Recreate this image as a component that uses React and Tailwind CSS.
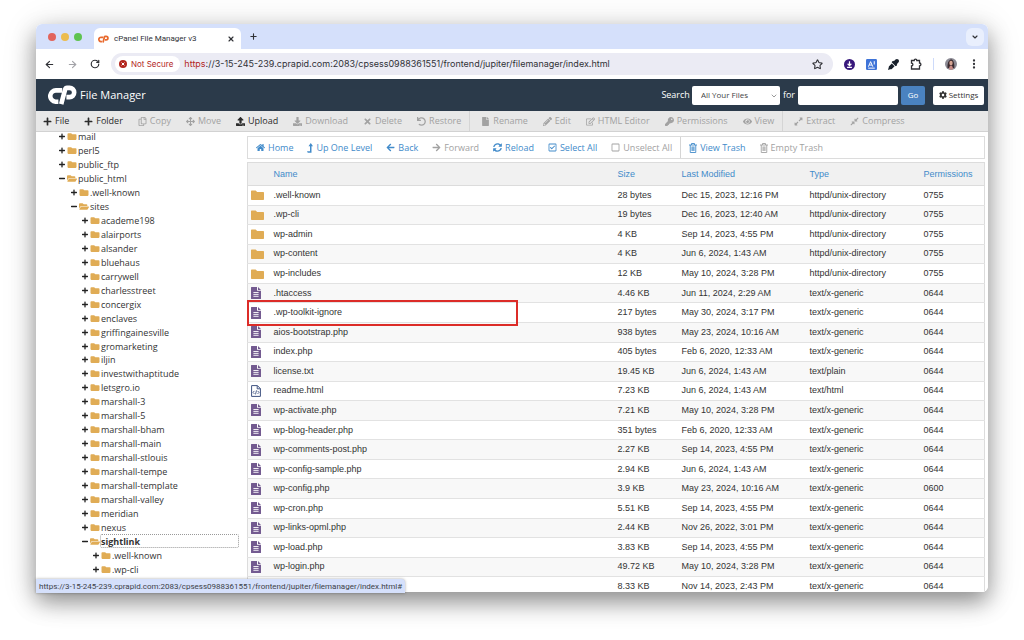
import React, { useState } from "react";
import {
    FaPlus, FaMinus, FaRegCopy, FaArrowsAlt, FaUpload, FaDownload, FaTimes, FaUndo, FaFile, FaPencilAlt,
    FaRegEdit, FaKey, FaEye, FaExpandAlt, FaCompressAlt, FaHome, FaArrowLeft, FaArrowRight,
    FaSyncAlt, FaRegCheckSquare, FaRegSquare, FaCog, FaFolder, FaFolderOpen, FaEyeDropper,
} from "react-icons/fa";
import { ArrowLeft, ArrowRight, RotateCw, X, Plus, ChevronDown, Star, EllipsisVertical } from "lucide-react";

const TrashIcon = () => (
    <svg viewBox="0 0 16 20" className="h-[10px] w-2 shrink-0" fill="none" stroke="currentColor" strokeWidth="1.8">
        <path d="M0 4h16M5 4V1h6v3M2.5 4v15h11V4M6 7v9M8 7v9M10 7v9" />
    </svg>
);

const LevelUpIcon = () => (
    <svg viewBox="0 0 12 20" className="h-[10px] w-1.5 shrink-0" fill="currentColor">
        <path d="M7.5 0 12 6.5H9V19.5H1.5L0 16.5H6V6.5H3Z" />
    </svg>
);

const CpanelLogo = ({ className }) => (
    <svg viewBox="0 0 29 20" className={className} fill="none" stroke="currentColor" strokeWidth="4.6">
        <path d="M14.2 5.4H8.2A5.5 5.5 0 0 0 7.6 16.7H10.4" />
        <path d="M13.2 19.2 17.2 4.2Q17.6 2.9 19 2.9H21.6A4.6 4.6 0 0 1 21.6 12.1H18.4" />
    </svg>
);

const toolbarGroups = [
    [
        { label: "File", Icon: FaPlus, enabled: true },
        { label: "Folder", Icon: FaPlus, enabled: true },
        { label: "Copy", Icon: FaRegCopy },
        { label: "Move", Icon: FaArrowsAlt },
        { label: "Upload", Icon: FaUpload, enabled: true },
        { label: "Download", Icon: FaDownload },
        { label: "Delete", Icon: FaTimes },
        { label: "Restore", Icon: FaUndo },
    ],
    [
        { label: "Rename", Icon: FaFile },
        { label: "Edit", Icon: FaPencilAlt },
        { label: "HTML Editor", Icon: FaRegEdit },
        { label: "Permissions", Icon: FaKey },
        { label: "View", Icon: FaEye },
    ],
    [
        { label: "Extract", Icon: FaExpandAlt },
        { label: "Compress", Icon: FaCompressAlt },
    ],
];

const navGroups = [
    [
        { label: "Home", Icon: FaHome, enabled: true },
        { label: "Up One Level", Icon: LevelUpIcon, enabled: true },
        { label: "Back", Icon: FaArrowLeft, enabled: true },
        { label: "Forward", Icon: FaArrowRight },
        { label: "Reload", Icon: FaSyncAlt, enabled: true },
        { label: "Select All", Icon: FaRegCheckSquare, enabled: true },
        { label: "Unselect All", Icon: FaRegSquare },
    ],
    [
        { label: "View Trash", Icon: TrashIcon, enabled: true },
        { label: "Empty Trash", Icon: TrashIcon },
    ],
];

const siteFolders = [
    "academe198", "alairports", "alsander", "bluehaus", "carrywell", "charlesstreet", "concergix", "enclaves",
    "griffingainesville", "gromarketing", "iljin", "investwithaptitude", "letsgro.io", "marshall-3", "marshall-5",
    "marshall-bham", "marshall-main", "marshall-stlouis", "marshall-tempe", "marshall-template", "marshall-valley",
    "meridian", "nexus",
];

const tree = [
    { name: "mail", level: 0 },
    { name: "perl5", level: 0 },
    { name: "public_ftp", level: 0 },
    { name: "public_html", level: 0, open: true },
    { name: ".well-known", level: 1 },
    { name: "sites", level: 1, open: true },
    ...siteFolders.map((name) => ({ name, level: 2 })),
    { name: "sightlink", level: 2, open: true },
    { name: ".well-known", level: 3 },
    { name: ".wp-cli", level: 3 },
];

const levelPadding = ["pl-[23px]", "pl-[35px]", "pl-[46px]", "pl-[57px]"];

const files = [
    [".well-known", "28 bytes", "Dec 15, 2023, 12:16 PM", "httpd/unix-directory", "0755"],
    [".wp-cli", "19 bytes", "Dec 16, 2023, 12:40 AM", "httpd/unix-directory", "0755"],
    ["wp-admin", "4 KB", "Sep 14, 2023, 4:55 PM", "httpd/unix-directory", "0755"],
    ["wp-content", "4 KB", "Jun 6, 2024, 1:43 AM", "httpd/unix-directory", "0755"],
    ["wp-includes", "12 KB", "May 10, 2024, 3:28 PM", "httpd/unix-directory", "0755"],
    [".htaccess", "4.46 KB", "Jun 11, 2024, 2:29 AM", "text/x-generic", "0644"],
    [".wp-toolkit-ignore", "217 bytes", "May 30, 2024, 3:17 PM", "text/x-generic", "0644"],
    ["aios-bootstrap.php", "938 bytes", "May 23, 2024, 10:16 AM", "text/x-generic", "0644"],
    ["index.php", "405 bytes", "Feb 6, 2020, 12:33 AM", "text/x-generic", "0644"],
    ["license.txt", "19.45 KB", "Jun 6, 2024, 1:43 AM", "text/plain", "0644"],
    ["readme.html", "7.23 KB", "Jun 6, 2024, 1:43 AM", "text/html", "0644"],
    ["wp-activate.php", "7.21 KB", "May 10, 2024, 3:28 PM", "text/x-generic", "0644"],
    ["wp-blog-header.php", "351 bytes", "Feb 6, 2020, 12:33 AM", "text/x-generic", "0644"],
    ["wp-comments-post.php", "2.27 KB", "Sep 14, 2023, 4:55 PM", "text/x-generic", "0644"],
    ["wp-config-sample.php", "2.94 KB", "Jun 6, 2024, 1:43 AM", "text/x-generic", "0644"],
    ["wp-config.php", "3.9 KB", "May 23, 2024, 10:16 AM", "text/x-generic", "0600"],
    ["wp-cron.php", "5.51 KB", "Sep 14, 2023, 4:55 PM", "text/x-generic", "0644"],
    ["wp-links-opml.php", "2.44 KB", "Nov 26, 2022, 3:01 PM", "text/x-generic", "0644"],
    ["wp-load.php", "3.83 KB", "Sep 14, 2023, 4:55 PM", "text/x-generic", "0644"],
    ["wp-login.php", "49.72 KB", "May 10, 2024, 3:28 PM", "text/x-generic", "0644"],
    ["", "8.33 KB", "Nov 14, 2023, 2:43 PM", "text/x-generic", "0644"],
];

const FileIcon = ({ type }) => {
    if (type === "httpd/unix-directory") {
        return (
            <svg viewBox="0 0 13 12" className="block h-[12px] w-[13px]">
                <path d="M0 2.2Q0 1.5.7 1.5H4.6L6.2 3H12.3Q13 3 13 3.7V10.3Q13 11 12.3 11H.7Q0 11 0 10.3Z" fill="#e0ac55" />
            </svg>
        );
    }
    if (type === "text/html") {
        return (
            <svg viewBox="0 0 10 12" className="block h-[12px] w-[10px]" fill="none" stroke="#3f5280">
                <path d="M.6.6H6.4L9.4 3.6V11.4H.6ZM6.2.6V3.8H9.4" fill="#fff" />
                <path d="M3.4 5.9 2 7.4 3.4 8.9M6.6 5.9 8 7.4 6.6 8.9M5.5 5.4 4.5 9.4" strokeWidth=".9" />
            </svg>
        );
    }
    return (
        <svg viewBox="0 0 10 12" className="block h-[12px] w-[10px]">
            <path d="M.5 0H6V3.8H10V11.5Q10 12 9.5 12H.5Q0 12 0 11.5V.5Q0 0 .5 0ZM7 0 10 2.9H7Z" fill="#735a90" />
            <path d="M2.4 5.5h5.2M2.4 7.4h5.2M2.4 9.3h5.2" stroke="#fff" strokeWidth=".9" />
        </svg>
    );
};

const ActionGroups = ({ groups, enabledClass, groupClass }) => (
    <>
        {groups.map((group, i) => (
            <div key={i} className={`flex items-center ${groupClass} ${i > 0 ? "border-l border-[#d5d5d5]" : ""}`}>
                {group.map(({ label, Icon, enabled }) => (
                    <button
                        key={label}
                        type="button"
                        disabled={!enabled}
                        className={`flex items-center gap-[3px] whitespace-nowrap ${enabled ? enabledClass : "text-[#a2a2a2]"}`}
                    >
                        <Icon className="h-[9px] w-[9px] shrink-0" />
                        {label}
                    </button>
                ))}
            </div>
        ))}
    </>
);

const BrowserChrome = () => (
    <div className="shrink-0 font-[Inter,sans-serif] text-[#303136]">
        <div className="flex h-[25px] items-center bg-[#d5e0fb]">
            <div className="flex w-[58px] gap-[5px] pl-3">
                <span className="h-2 w-2 rounded-full bg-[#e2645c]" />
                <span className="h-2 w-2 rounded-full bg-[#ecbc4f]" />
                <span className="h-2 w-2 rounded-full bg-[#5fc350]" />
            </div>
            <div className="flex h-[21px] w-[147px] items-center self-end rounded-t-md bg-white pr-1.5 pl-1 font-[Roboto,sans-serif] text-[8px]">
                <CpanelLogo className="mr-[5px] h-[8px] w-[11px] text-[#e8692d]" />
                <span className="flex-1">cPanel File Manager v3</span>
                <button type="button" aria-label="Close tab"><X className="h-2 w-2" strokeWidth={3.5} /></button>
            </div>
            <button type="button" aria-label="New tab" className="ml-2"><Plus className="h-[9px] w-[9px]" strokeWidth={3} /></button>
            <button type="button" aria-label="Search tabs" className="mr-1 ml-auto flex h-[18px] w-[18px] items-center justify-center rounded-md bg-[#e9effd]">
                <ChevronDown className="h-2 w-2" strokeWidth={3.5} />
            </button>
        </div>
        <div className="flex h-[30px] items-center bg-white px-2">
            <button type="button" aria-label="Back"><ArrowLeft className="h-[11px] w-[11px]" strokeWidth={2.4} /></button>
            <button type="button" aria-label="Forward" className="ml-3"><ArrowRight className="h-[11px] w-[11px] text-[#a3a3a8]" strokeWidth={2.4} /></button>
            <button type="button" aria-label="Reload" className="ml-3"><RotateCw className="h-[10px] w-[10px]" strokeWidth={2.8} /></button>
            <div className="ml-[11px] flex h-[22px] flex-1 items-center rounded-full bg-[#ebebf4] pr-2.5 pl-1 text-[9px]">
                <button type="button" className="flex h-4 items-center gap-1 rounded-full bg-white pr-[7px] pl-1 text-[8px] text-[#b3261e]">
                    <svg viewBox="0 0 8 8" className="h-2 w-2">
                        <circle cx="4" cy="4" r="4" fill="#b3261e" />
                        <path d="m2.6 2.6 2.8 2.8M5.4 2.6 2.6 5.4" stroke="#fff" strokeWidth="1" />
                    </svg>
                    Not Secure
                </button>
                <span className="ml-1 text-[#b3261e]">https</span>
                <input
                    aria-label="Address"
                    defaultValue="://3-15-245-239.cprapid.com:2083/cpsess0988361551/frontend/jupiter/filemanager/index.html"
                    className="min-w-0 flex-1 bg-transparent outline-none"
                />
                <button type="button" aria-label="Bookmark"><Star className="h-[11px] w-[11px]" strokeWidth={2.4} /></button>
            </div>
            <div className="ml-[11px] flex items-center gap-[11px]">
                <svg viewBox="0 0 10 10" className="h-[11px] w-[11px]">
                    <circle cx="5" cy="5" r="5" fill="#38187c" />
                    <path d="M5 2v3.6M3.3 4.3 5 6l1.7-1.7M2.8 7.6h4.4" fill="none" stroke="#fff" strokeWidth="1.1" />
                </svg>
                <svg viewBox="0 0 10 10" className="h-[11px] w-[11px]">
                    <rect width="10" height="10" rx="1.2" fill="#3f74d8" />
                    <path d="M2.2 7 4.2 2.4 6.2 7M3 5.5h2.4M7.5 2v3M2 8.3h6" fill="none" stroke="#fff" strokeWidth=".9" />
                </svg>
                <FaEyeDropper className="h-[11px] w-[11px] text-[#17202b]" />
                <svg viewBox="0 0 12 12" className="h-3 w-3" fill="none" stroke="#303136" strokeWidth="1.3">
                    <path d="M1.5 2.5H4.2a1.3 1.3 0 0 1 2.6 0H9.5V5a1.4 1.4 0 0 1 0 2.8V11H1.5V8a1.4 1.4 0 0 0 0-2.8Z" />
                </svg>
                <span className="h-3 w-px bg-[#cddafa]" />
                <svg viewBox="0 0 12 12" className="h-3 w-3">
                    <circle cx="6" cy="6" r="6" fill="#8b8a94" />
                    <path d="M2.5 10Q2 3 6 1.2 9.6 2 9.3 10Z" fill="#3b2b30" />
                    <ellipse cx="6" cy="5" rx="1.7" ry="2.2" fill="#d6a593" />
                    <path d="M4 11.5Q4.2 7.6 6 7.6T8 11.5Z" fill="#c88b86" />
                </svg>
                <button type="button" aria-label="Menu"><EllipsisVertical className="h-3 w-3" strokeWidth={2.6} /></button>
            </div>
        </div>
    </div>
);

const AppHeader = () => (
    <header className="flex h-8 shrink-0 items-center bg-[#2b3a4a] pr-1 pl-3 text-[9px] text-white">
        <CpanelLogo className="h-5 w-[29px]" />
        <h1 className="ml-[3px] flex-1 text-[11px]">File Manager</h1>
        <label htmlFor="scope" className="mr-[2px]">Search</label>
        <div className="relative">
            <select id="scope" className="h-[19px] w-[88px] appearance-none rounded-xs bg-white pl-[9px] text-[8px] text-[#444]">
                <option>All Your Files</option>
            </select>
            <ChevronDown className="pointer-events-none absolute top-1.5 right-0.5 h-2 w-2 text-[#666]" />
        </div>
        <label htmlFor="query" className="mx-[3px]">for</label>
        <input id="query" type="text" className="h-[19px] w-[100px] rounded-xs bg-white px-1 text-[#333]" />
        <button type="button" className="ml-[3px] h-[19px] w-6 rounded-xs bg-[#4a82c0] text-[8px]">Go</button>
        <button type="button" className="ml-2 flex h-[19px] w-[51px] items-center justify-center gap-[2px] rounded-xs bg-white text-[8px] text-[#333]">
            <FaCog className="h-2 w-2" />
            Settings
        </button>
    </header>
);

const FolderTree = ({ selected, onSelect }) => (
    <nav className="w-[211px] shrink-0 overflow-hidden pr-2">
        <ul className="-mt-0.5 flex h-[446px] flex-col text-[9px] text-[#333]">
            {tree.map((item, i) => {
                const isSelected = selected === item.name;
                const Toggle = item.open ? FaMinus : FaPlus;
                const Folder = item.open ? FaFolderOpen : FaFolder;
                return (
                    <li key={i} className={`flex min-h-0 flex-1 items-center ${levelPadding[item.level]}`}>
                        <button type="button" aria-label={`Toggle ${item.name}`} className="mr-0.5">
                            <Toggle className="h-[7px] w-1.5 text-[#222]" />
                        </button>
                        <Folder className="h-[9px] w-[10px] shrink-0 text-[#e0ac55]" />
                        <button
                            type="button"
                            onClick={() => onSelect(item.name)}
                            className={`h-full border text-left leading-none ${isSelected ? "flex-1 rounded-xs border-dotted border-[#999] font-bold" : "border-transparent"}`}
                        >
                            {item.name}
                        </button>
                    </li>
                );
            })}
        </ul>
    </nav>
);

const FileTable = () => (
    <table className="h-[435px] w-full table-fixed border-collapse border border-[#dcdcdc] font-['Liberation_Sans',Arial,sans-serif] text-[9px] leading-none text-[#333]">
        <thead>
            <tr className="h-[23px] border-b border-[#dcdcdc] bg-[#f1f1f1] text-left text-[#428bca]">
                <th className="w-[26px]" aria-label="Icon" />
                <th className="font-normal">Name</th>
                <th className="w-16 font-normal">Size</th>
                <th className="w-32 font-normal">Last Modified</th>
                <th className="w-[114px] font-normal">Type</th>
                <th className="w-[61px] font-normal">Permissions</th>
            </tr>
        </thead>
        <tbody>
            {files.map(([name, size, modified, type, permissions], i) => (
                <tr key={i} className="border-b border-[#e2e2e2] bg-white even:bg-[#f8f8f8]">
                    <td className="relative pl-[3px]">
                        <FileIcon type={type} />
                        {name === ".wp-toolkit-ignore" && (
                            <span className="absolute -top-[3px] -left-px z-10 h-[26px] w-[271px] border-2 border-[#dc2c28]" />
                        )}
                    </td>
                    <td>{name}</td>
                    <td>{size}</td>
                    <td>{modified}</td>
                    <td>{type}</td>
                    <td>{permissions}</td>
                </tr>
            ))}
        </tbody>
    </table>
);

const App = () => {
    const [selected, setSelected] = useState("sightlink");

    return (
        <div className="h-screen overflow-hidden bg-white px-9 pt-6 pb-12 font-['Open_Sans',sans-serif]">
            <div className="relative flex h-full flex-col rounded-md shadow-[0_10px_22px_rgba(0,0,0,0.38),0_4px_36px_rgba(0,0,0,0.14)]">
                <div className="flex min-h-0 flex-1 flex-col overflow-hidden rounded-md bg-white">
                    <BrowserChrome />
                    <AppHeader />
                    <div className="flex h-[21px] shrink-0 border-b border-[#d2d2d2] bg-[#e8e8e8] text-[9px]">
                        <ActionGroups groups={toolbarGroups} enabledClass="text-[#2b2b2b]" groupClass="gap-[15px] pr-2 pl-[11px] first:pl-[7px]" />
                    </div>
                    <div className="flex min-h-0 flex-1">
                        <FolderTree selected={selected} onSelect={setSelected} />
                        <main className="min-w-0 flex-1 overflow-hidden pt-1 pr-[3px]">
                            <div className="mb-[3px] flex h-[23px] border border-[#dcdcdc] text-[9px]">
                                <ActionGroups groups={navGroups} enabledClass="text-[#428bca]" groupClass="gap-[14px] px-2" />
                            </div>
                            <FileTable />
                        </main>
                    </div>
                </div>
                <div className="absolute -bottom-px left-0 z-20 h-[14px] rounded-tr-sm bg-[#d5e0fb] px-[3px] font-[Roboto,sans-serif] text-[8px] leading-4 text-[#3c3f48] shadow-[0_0_3px_rgba(0,0,0,0.35)]">
                    https://3-15-245-239.cprapid.com:2083/cpsess0988361551/frontend/jupiter/filemanager/index.html#
                </div>
            </div>
        </div>
    );
};

export default App;
